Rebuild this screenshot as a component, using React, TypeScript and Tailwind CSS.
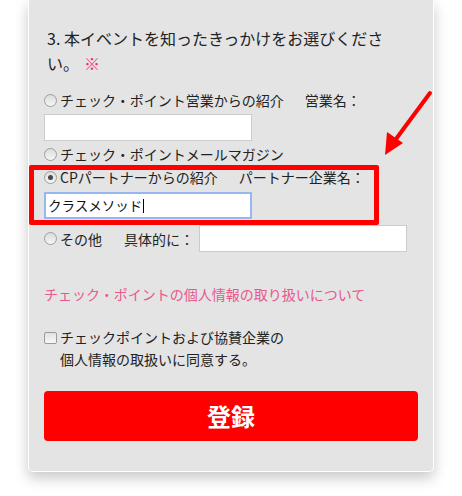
import React from "react";

const font = { fontFamily: '"Noto Sans CJK JP", "Noto Sans", sans-serif' };

function Radio({ checked = false }: { checked?: boolean }) {
  return (
    <span className="w-[13px] h-[13px] rounded-full border border-[#9e9e9e] bg-gradient-to-b from-[#dcdcdc] to-[#f6f6f6] flex items-center justify-center shrink-0 mr-[3px]">
      {checked && <span className="w-[5px] h-[5px] rounded-full bg-[#4a4a4a]" />}
    </span>
  );
}

export default function App() {
  return (
    <div className="relative w-[462px] h-[496px] bg-white overflow-hidden text-[#222]" style={font}>
      <div className="ml-[28px] w-[406px] bg-[#e4e4e4] border border-t-0 border-white rounded-b-[5px] shadow-[0_6px_14px_rgba(0,0,0,0.22)] px-[15px] pt-[26px] pb-[30px]">
        <div className="pl-[3px] w-[348px] text-[16px] leading-[25px]">
          3. 本イベントを知ったきっかけをお選びください。<span className="ml-[5px] text-[#f2336a]">※</span>
        </div>

        <div className="mt-[13px] h-[22px] flex items-center text-[14px] leading-[22px]">
          <Radio />
          <span>チェック・ポイント営業からの紹介</span>
          <span className="ml-[21px]">営業名：</span>
        </div>
        <div className="mt-[3px] w-[208px] h-[27px] bg-white border border-[#cccccc]" />

        <div className="mt-[2px] h-[22px] flex items-center text-[14px] leading-[22px]">
          <Radio />
          <span>チェック・ポイントメールマガジン</span>
        </div>

        <div className="mt-[1px] h-[22px] flex items-center text-[14px] leading-[22px]">
          <Radio checked />
          <span>CPパートナーからの紹介</span>
          <span className="ml-[21px]">パートナー企業名：</span>
        </div>
        <div className="mt-[4px] w-[208px] h-[27px] bg-white border-2 border-[#93b7ee] flex items-center pl-[2px] text-[13.5px] text-[#111]">
          <span>クラスメソッド</span>
          <span className="ml-[1px] w-[1px] h-[14px] bg-black" />
        </div>

        <div className="mt-[6px] h-[27px] flex items-center text-[14px] leading-[22px]">
          <Radio />
          <span>その他</span>
          <span className="ml-[22px]">具体的に：</span>
          <div className="ml-[5px] w-[208px] h-[27px] bg-white border border-[#cccccc]" />
        </div>

        <div className="mt-[31px] text-[14px] leading-[22px] text-[#e8588c]">
          チェック・ポイントの個人情報の取り扱いについて
        </div>

        <div className="mt-[21px] flex text-[14px] leading-[22px]">
          <span className="mt-[6px] w-[13px] h-[12px] rounded-[2px] border border-[#9a9a9a] bg-gradient-to-b from-[#e2e2e2] to-[#f7f7f7] shrink-0 mr-[3px]" />
          <div>
            チェックポイントおよび協賛企業の
            <br />
            個人情報の取扱いに同意する。
          </div>
        </div>

        <button className="mt-[21px] w-[374px] h-[50px] rounded-[4px] bg-[#ff0000] text-white text-[24px] font-bold flex items-center justify-center">
          登録
        </button>
      </div>

      <div className="absolute left-[29px] top-[165px] w-[350px] h-[60px] border-[5px] border-[#ff0000] rounded-[2px]" />

      <svg className="absolute left-0 top-0" width="462" height="496" viewBox="0 0 462 496">
        <line x1="430" y1="93" x2="396" y2="139" stroke="#ff0000" strokeWidth="4" strokeLinecap="round" />
        <polygon points="385,155 387,132 403,143" fill="#ff0000" />
      </svg>
    </div>
  );
}
